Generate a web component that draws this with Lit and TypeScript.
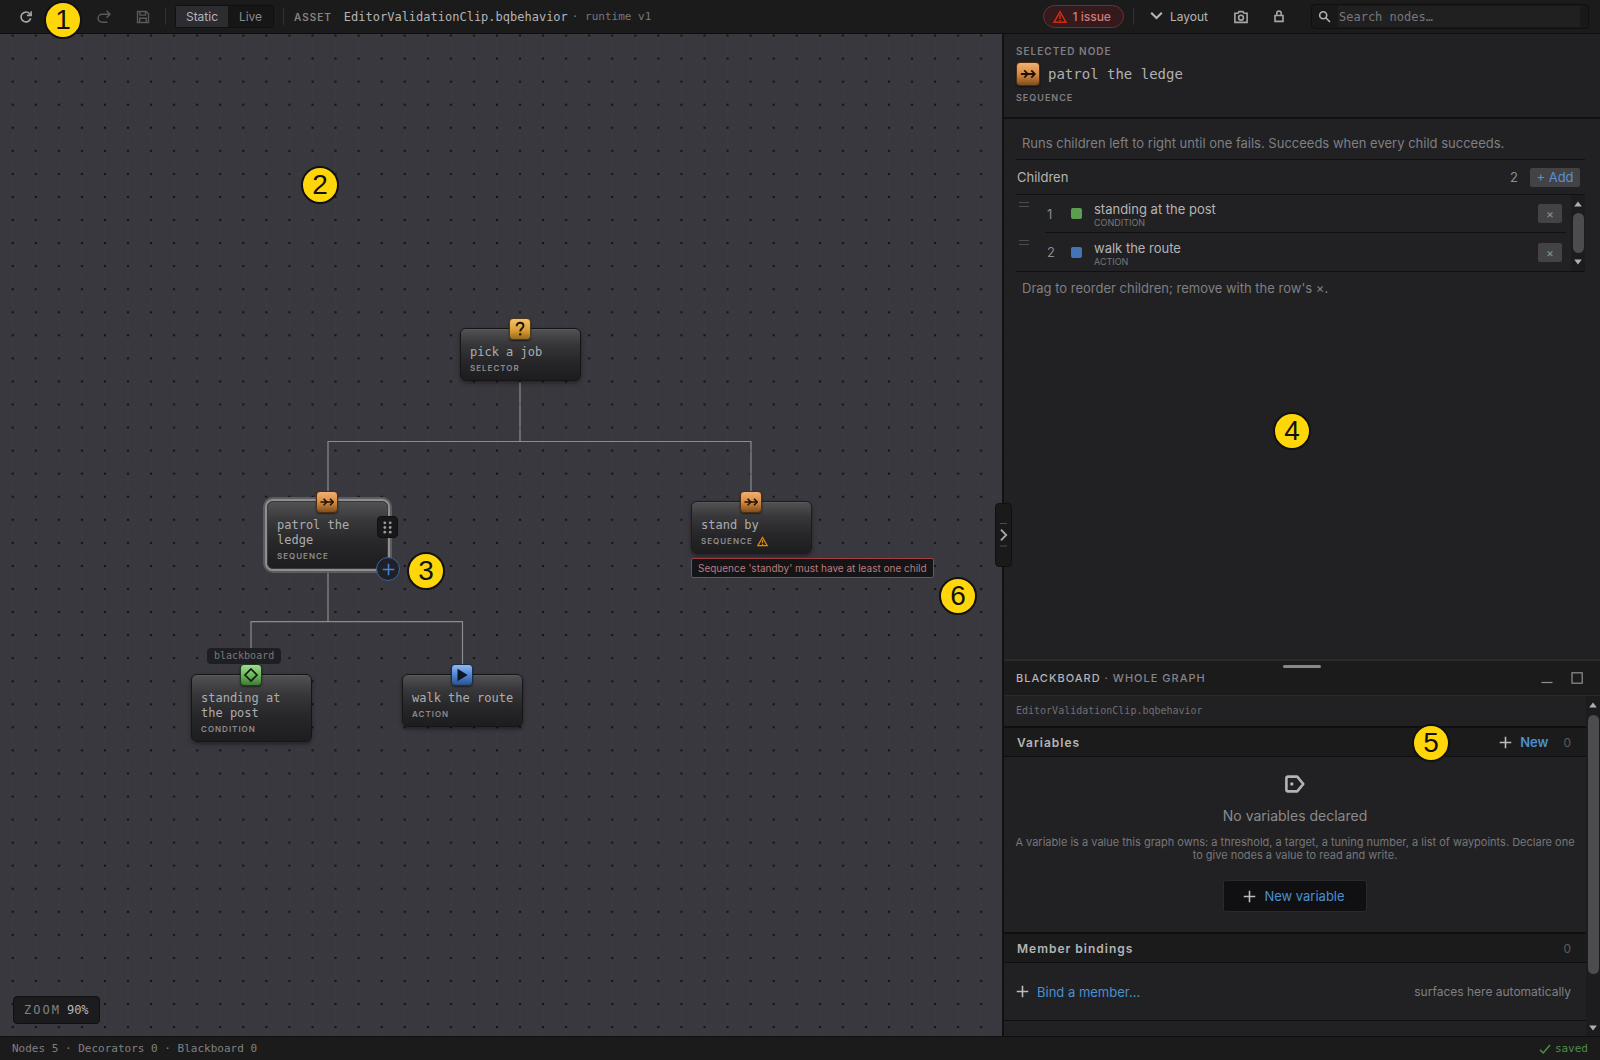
import { LitElement, html, css, svg, nothing } from "lit";
import { customElement, property } from "lit/decorators.js";

type Kind = "selector" | "sequence" | "condition" | "action";

interface GraphNode {
  kind: Kind;
  label: string;
  x: number;
  y: number;
  selected?: boolean;
  invalid?: boolean;
}

const NODES: GraphNode[] = [
  { kind: "selector", label: "pick a job", x: 460, y: 294 },
  { kind: "sequence", label: "patrol the ledge", x: 267, y: 467, selected: true },
  { kind: "sequence", label: "stand by", x: 691, y: 467, invalid: true },
  { kind: "condition", label: "standing at the post", x: 191, y: 640 },
  { kind: "action", label: "walk the route", x: 402, y: 640 },
];

const CALLOUTS = [
  { n: 1, x: 63, y: 20 },
  { n: 2, x: 320, y: 185 },
  { n: 3, x: 426, y: 571 },
  { n: 4, x: 1292, y: 431 },
  { n: 5, x: 1431, y: 743 },
  { n: 6, x: 958, y: 596 },
];

const CHILDREN = [
  { name: "standing at the post", kind: "condition" },
  { name: "walk the route", kind: "action" },
];

const glyphs = {
  selector: svg`<path d="M7.6 8.2c0-2.1 1.4-3.4 3.5-3.4s3.4 1.2 3.4 3c0 2.6-3.3 2.8-3.3 5.6" fill="none" stroke="#1c1508" stroke-width="1.9"/><rect x="10.1" y="15.2" width="2.2" height="2.2" fill="#1c1508"/>`,
  sequence: svg`<g fill="none" stroke="#1c1208" stroke-width="1.6"><path d="M4.500 11H17"/><path d="M7.600 7.800 10.800 11l-3.200 3.200M14 7.800 17.200 11 14 14.200"/></g>`,
  condition: svg`<path d="M11 5 17 11 11 17 5 11Z" fill="none" stroke="#0f1c0c" stroke-width="1.7"/>`,
  action: svg`<path d="M6.500 4.800 16.600 11 6.500 17.200Z" fill="#0c1626"/>`,
};

const warning = html`<svg class="warn" viewBox="0 0 14 14" aria-hidden="true">
  <path d="M7 1.800 13 12.300H1Z" fill="none" stroke="currentColor" stroke-width="1.500" />
  <path d="M7 5v4M7 10v1.400" fill="none" stroke="currentColor" stroke-width="1.500" />
</svg>`;

const plus = html`<svg class="plus" viewBox="0 0 14 14" aria-hidden="true">
  <path d="M7 .8v12.400M.8 7h12.400" stroke="currentColor" stroke-width="1.700" />
</svg>`;

const arrow = (dir: "up" | "down") => html`<svg class="arrow" viewBox="0 0 8 6" aria-hidden="true">
  <path d=${dir === "up" ? "M4 .5 7.8 5.5H.2Z" : "M4 5.5 7.8 .5H.2Z"} fill="#b0b0b2" />
</svg>`;

@customElement("kind-badge")
export class KindBadge extends LitElement {
  @property() kind: Kind = "sequence";

  static styles = css`
    :host { display: block; width: 22px; height: 22px; }
    .badge {
      box-sizing: border-box;
      width: 100%;
      height: 100%;
      border: 1px solid #4a2f14;
      border-radius: 4px;
      box-shadow: 0 1px 2px #0008;
      overflow: hidden;
    }
    .selector { background: linear-gradient(#f3c26a, #dd9f35 55%, #946a22); border-color: #4d3a18; }
    .sequence { background: linear-gradient(#f0b074, #d98a3f 50%, #7e4e20); }
    .condition { background: linear-gradient(#a5d996, #6ab95a 50%, #3f7a35); border-color: #1f3a1c; }
    .action { background: linear-gradient(#93b9f0, #4d86d6 50%, #2c5088); border-color: #1b2d4a; }
    svg { display: block; width: 100%; height: 100%; }
  `;

  render() {
    return html`<div class="badge ${this.kind}">
      <svg viewBox="1 1 20 20" aria-hidden="true">${glyphs[this.kind]}</svg>
    </div>`;
  }
}

@customElement("graph-node")
export class GraphNodeCard extends LitElement {
  @property({ attribute: false }) node!: GraphNode;

  static styles = css`
    :host { display: block; width: 121px; font-family: "DejaVu Sans Mono", monospace; }
    .card {
      position: relative;
      box-sizing: border-box;
      padding: 16px 4px 6px 9px;
      border: 1px solid #151517;
      border-radius: 6px;
      background: linear-gradient(#525254, #38383a 28%, #272729 62%, #1d1d1f);
      box-shadow: 0 2px 4px #0006, inset 0 1px 0 #5a5a5c;
      color: #adadaf;
    }
    .selected { box-shadow: 0 0 0 2px #8f8f92, 0 0 0 4px #5b5b60; border-color: #3a3a3c; }
    .invalid { border-color: #2c1518; }
    kind-badge { position: absolute; top: -11px; left: 50%; margin-left: -12px; }
    .name { font-size: 12px; line-height: 15px; }
    .kind {
      display: flex;
      align-items: center;
      gap: 4px;
      margin-top: 2px;
      font: 600 8px/12px Inter, sans-serif;
      letter-spacing: 1px;
      text-transform: uppercase;
      color: #8c8c8f;
    }
    .warn { width: 11px; height: 11px; color: #d98a14; }
    button { position: absolute; display: grid; place-items: center; padding: 0; }
    .grip {
      top: 14px;
      right: -11px;
      width: 21px;
      height: 22px;
      border: 1px solid #101011;
      border-radius: 4px;
      background: #18181a;
    }
    .add {
      right: -13px;
      bottom: -13px;
      width: 24px;
      height: 24px;
      border: 1px solid #3c659f;
      border-radius: 50%;
      background: #1e2128;
      color: #4a82cf;
    }
    .grip svg { width: 9px; height: 13px; }
    .add svg { width: 13px; height: 13px; }
  `;

  render() {
    const { kind, label, selected, invalid } = this.node;
    return html`<article class="card ${selected ? "selected" : ""} ${invalid ? "invalid" : ""}">
      <kind-badge .kind=${kind}></kind-badge>
      <div class="name">${label}</div>
      <div class="kind">${kind}${invalid ? warning : nothing}</div>
      ${selected
        ? html`<button class="grip" aria-label="Move node">
              <svg viewBox="0 0 9 13" fill="#9a9a9c">
                ${[1.8, 6.5, 11.2].map((y) => svg`<circle cx="1.8" cy=${y} r="1.4"/><circle cx="7.2" cy=${y} r="1.4"/>`)}
              </svg>
            </button>
            <button class="add" aria-label="Add child">${plus}</button>`
        : nothing}
    </article>`;
  }
}

@customElement("graph-canvas")
export class GraphCanvas extends LitElement {
  static styles = css`
    :host { display: block; position: relative; min-width: 0; background: #39383e; }
    .edges { position: absolute; inset: 0; width: 100%; height: 100%; }
    graph-node, .tag, .error, .zoom, .collapse { position: absolute; }
    .tag {
      left: 207px;
      top: 614px;
      padding: 0 7px;
      border-radius: 4px;
      background: #1f1f23;
      color: #77777b;
      font: 10px/16px "DejaVu Sans Mono", monospace;
    }
    .error {
      left: 691px;
      top: 524px;
      padding: 0 6px;
      border: 1px solid #a23f45;
      border-radius: 2px;
      background: #151416;
      color: #bd7b7d;
      font: 10px/18px Inter, sans-serif;
      white-space: nowrap;
    }
    .zoom {
      left: 13px;
      bottom: 12px;
      display: flex;
      gap: 6px;
      padding: 0 10px;
      border: 1px solid #101012;
      border-radius: 4px;
      background: #1c1c1e;
      color: #b8b8ba;
      font: 12px/26px "DejaVu Sans Mono", monospace;
    }
    .zoom span { color: #808084; letter-spacing: 2px; }
    .collapse {
      z-index: 2;
      top: 50%;
      right: -10px;
      display: grid;
      place-items: center;
      width: 17px;
      height: 64px;
      margin-top: -32px;
      padding: 0;
      border: 1px solid #101012;
      border-radius: 4px;
      background: #1a1a1b;
    }
    .collapse svg { width: 9px; height: 28px; }
  `;

  render() {
    return html`
      <svg class="edges" aria-hidden="true">
        <defs>
          <pattern id="dots" x="1.2" y="-10" width="23.06" height="23.06" patternUnits="userSpaceOnUse">
            <path d="M11.5 0V23.06M0 11.5H23.06" stroke="#3b3a40" stroke-width="1" />
            <circle cx="11.5" cy="11.5" r="1.25" fill="#131316" />
          </pattern>
        </defs>
        <rect width="100%" height="100%" fill="url(#dots)" />
        <g fill="none" stroke="#8b8b90" stroke-width="1.2">
          <path d="M520 348V407.5M328 457V407.5H751V457" />
          <path d="M328 538V587.7M251 630V587.7H462.5V630" />
        </g>
      </svg>
      ${NODES.map((n) => html`<graph-node .node=${n} style="left:${n.x}px;top:${n.y}px"></graph-node>`)}
      <div class="tag">blackboard</div>
      <div class="error" role="alert">Sequence 'standby' must have at least one child</div>
      <div class="zoom"><span>ZOOM</span>90%</div>
      <button class="collapse" aria-label="Collapse inspector">
        <svg viewBox="0 0 9 28" fill="none">
          <path d="M1 2.500H8M1 25H8" stroke="#4a4a4c" />
          <path d="M2 8.700 7.200 14 2 19.300" stroke="#a5a5a8" stroke-width="1.900" />
        </svg>
      </button>
    `;
  }
}

@customElement("inspector-panel")
export class InspectorPanel extends LitElement {
  static styles = css`
    :host { display: block; min-height: 0; color: #b4b4b6; font-family: Inter, sans-serif; }
    button { font: inherit; border: 0; padding: 0; }
    .head { padding: 10px 12px 12px; border-bottom: 2px solid #111113; }
    .cap {
      font-size: 9px;
      font-weight: 600;
      line-height: 14px;
      letter-spacing: 1px;
      color: #7f7f83;
      text-transform: uppercase;
    }
    .lead { font-size: 10px; }
    .title { display: flex; align-items: center; gap: 8px; margin: 4px 0 5px; }
    .title kind-badge { width: 24px; height: 24px; }
    h2 { margin: 0; font: 14px/24px "DejaVu Sans Mono", monospace; color: #b0b0b2; }
    .body { padding: 9px 15px 0 12px; }
    .note { margin: 0; padding: 3px 6px; font-size: 13px; line-height: 24px; color: #7f7f83; }
    .bar {
      display: flex;
      align-items: center;
      gap: 12px;
      height: 34px;
      margin-top: 1px;
      padding: 0 5px 0 1px;
      border-top: 1px solid #101012;
      border-bottom: 1px solid #101012;
      font-size: 13px;
    }
    .bar h3 { flex: 1; margin: 0; font-size: 13px; font-weight: 400; }
    .bar .count { color: #8f8f92; }
    .bar button {
      width: 50px;
      border-radius: 2px;
      background: #434345;
      color: #5b8fd8;
      font-size: 13px;
      line-height: 19px;
    }
    .list { display: flex; margin-bottom: 1px; border-bottom: 1px solid #101012; }
    ol { flex: 1; margin: 0; padding: 0; list-style: none; }
    li { display: flex; align-items: center; height: 38px; padding-right: 5px; }
    .drag { align-self: flex-start; width: 10px; height: 3px; margin: 7px 16px 0 3px; border: solid #4b4b4d; border-width: 1px 0; }
    .row {
      display: flex;
      flex: 1;
      align-items: center;
      box-sizing: border-box;
      height: 100%;
      padding-right: 4px;
    }
    li:first-child .row { border-bottom: 1px solid #101012; }
    .idx { width: 24px; padding-left: 2px; font-size: 13px; color: #8a8a8d; }
    .swatch { width: 11px; height: 11px; margin-right: 12px; border-radius: 2px; }
    .condition { background: #5c9e50; }
    .action { background: #4474b8; }
    .text { flex: 1; padding-top: 2px; }
    .name { font-size: 13px; line-height: 16px; }
    .type { font-size: 9px; line-height: 11px; color: #77777a; text-transform: uppercase; }
    .remove { width: 24px; height: 19px; border-radius: 2px; background: #434345; color: #8f8f91; font-size: 12px; line-height: 19px; }
    .scroll {
      display: flex;
      flex-direction: column;
      align-items: center;
      width: 14px;
      padding: 6px 0;
      gap: 6px;
      background: #1c1c1e;
    }
    .arrow { width: 8px; height: 6px; }
    .thumb { flex: 1; width: 11px; border-radius: 6px; background: #4c4c4e; }
  `;

  render() {
    return html`
      <header class="head">
        <div class="cap lead">Selected node</div>
        <div class="title"><kind-badge .kind=${"sequence" as Kind}></kind-badge><h2>patrol the ledge</h2></div>
        <div class="cap">Sequence</div>
      </header>
      <div class="body">
        <p class="note">Runs children left to right until one fails. Succeeds when every child succeeds.</p>
        <div class="bar"><h3>Children</h3><span class="count">2</span><button>+ Add</button></div>
        <div class="list">
          <ol>
            ${CHILDREN.map(
              (c, i) => html`<li>
                <span class="drag"></span>
                <div class="row">
                  <span class="idx">${i + 1}</span>
                  <span class="swatch ${c.kind}"></span>
                  <div class="text">
                    <div class="name">${c.name}</div>
                    <div class="type">${c.kind}</div>
                  </div>
                  <button class="remove" aria-label="Remove ${c.name}">×</button>
                </div>
              </li>`,
            )}
          </ol>
          <div class="scroll">${arrow("up")}<span class="thumb"></span>${arrow("down")}</div>
        </div>
        <p class="note">Drag to reorder children; remove with the row's ×.</p>
      </div>
    `;
  }
}

@customElement("blackboard-panel")
export class BlackboardPanel extends LitElement {
  static styles = css`
    :host { display: block; border-top: 2px solid #2b2b2e; color: #b4b4b6; font-family: Inter, sans-serif; }
    button { font: inherit; border: 0; padding: 0; background: none; cursor: pointer; }
    header {
      position: relative;
      display: flex;
      align-items: center;
      box-sizing: border-box;
      height: 35px;
      padding: 0 17px 0 12px;
      border-bottom: 1px solid #2a2a2d;
      background: #1b1b1b;
      font-size: 11px;
      letter-spacing: 1px;
    }
    .grab { position: absolute; top: 4px; left: 50%; width: 38px; height: 3px; margin-left: -19px; border-radius: 2px; background: #88888b; }
    h2 { margin: 0; font-size: 11px; font-weight: 500; }
    .scope { flex: 1; margin-left: 4px; color: #85858a; font-weight: 500; }
    .win { display: flex; gap: 18px; }
    .win svg { display: block; width: 12px; height: 12px; }
    .content { display: flex; }
    .sections { flex: 1; min-width: 0; }
    .file { padding: 0 12px; font: 10px/30px "DejaVu Sans Mono", monospace; color: #707073; }
    .section {
      display: flex;
      align-items: center;
      box-sizing: border-box;
      height: 31px;
      padding: 0 15px 0 13px;
      border: solid #0f0f10;
      border-width: 2px 0 1px;
      background: #1b1b1b;
    }
    h3 { flex: 1; margin: 0; font-size: 12px; font-weight: 600; letter-spacing: 1px; }
    .count { font-size: 12px; color: #5c5c5f; }
    .link { display: inline-flex; align-items: center; gap: 8px; color: #4a90cf; font-size: 13px; }
    .new { margin-right: 15px; font-weight: 600; }
    .plus { width: 13px; height: 13px; color: #bcbcbe; }
    .empty { display: flex; flex-direction: column; align-items: center; padding: 18px 8px 20px; }
    .tagicon { width: 20px; height: 18px; }
    .empty h4 { margin: 11px 0 8px; font-size: 14px; font-weight: 400; line-height: 24px; color: #8a8a8d; }
    .empty p { margin: 0; font-size: 11px; line-height: 13px; text-align: center; color: #77777a; }
    .create { height: 32px; margin-top: 18px; padding: 0 21px 0 19px; border: 1px solid #2a2a2c; border-radius: 3px; background: #101012; }
    .bind { display: flex; align-items: center; justify-content: space-between; height: 57px; padding: 0 15px 0 12px; border-bottom: 1px solid #0f0f10; }
    .hint { font-size: 12px; color: #7f7f82; }
    .tail { height: 15px; }
    .scroll { display: flex; flex-direction: column; align-items: center; box-sizing: border-box; width: 14px; padding: 6px 0 5px; gap: 7px; background: #1c1c1e; }
    .arrow { width: 8px; height: 6px; }
    .thumb { width: 11px; flex: 7; border-radius: 6px; background: #4c4c4e; }
    .track { flex: 1; }
  `;

  render() {
    return html`
      <header>
        <span class="grab"></span>
        <h2>BLACKBOARD</h2>
        <span class="scope">· WHOLE GRAPH</span>
        <div class="win">
          <button aria-label="Minimise"><svg viewBox="0 0 12 12"><path d="M.5 10.500h11" stroke="#929295" stroke-width="1.200" /></svg></button>
          <button aria-label="Maximise"><svg viewBox="0 0 12 12"><rect x="1" y=".8" width="10.200" height="10.400" fill="none" stroke="#929295" stroke-width="1.200" /></svg></button>
        </div>
      </header>
      <div class="content">
        <div class="sections">
          <div class="file">EditorValidationClip.bqbehavior</div>
          <div class="section">
            <h3>Variables</h3>
            <button class="link new">${plus}New</button>
            <span class="count">0</span>
          </div>
          <div class="empty">
            <svg class="tagicon" viewBox="0 0 20 18" aria-hidden="true">
              <path d="M3 1.600H12.200L18.300 9l-6.100 7.400H3Q1.400 16.400 1.400 14.800V3.200Q1.400 1.600 3 1.600Z" fill="none" stroke="#b4b4b6" stroke-width="2.600" stroke-linejoin="round" />
              <circle cx="6.800" cy="9" r="1.700" fill="#b4b4b6" />
            </svg>
            <h4>No variables declared</h4>
            <p>A variable is a value this graph owns: a threshold, a target, a tuning number, a list of waypoints. Declare one to give nodes a value to read and write.</p>
            <button class="link create">${plus}New variable</button>
          </div>
          <div class="section"><h3>Member bindings</h3><span class="count">0</span></div>
          <div class="bind">
            <button class="link">${plus}Bind a member…</button>
            <span class="hint">surfaces here automatically</span>
          </div>
          <div class="tail"></div>
        </div>
        <div class="scroll">${arrow("up")}<span class="thumb"></span><span class="track"></span>${arrow("down")}</div>
      </div>
    `;
  }
}

@customElement("top-bar")
export class TopBar extends LitElement {
  static styles = css`
    :host {
      display: flex;
      align-items: center;
      box-sizing: border-box;
      height: 34px;
      padding: 0 11px 0 6px;
      border-bottom: 1px solid #0e0e0f;
      background: #1b1b1b;
      color: #b4b4b6;
      font: 12px/16px Inter, sans-serif;
    }
    button { display: inline-flex; align-items: center; justify-content: center; font: inherit; color: inherit; background: none; border: 0; padding: 0; cursor: pointer; }
    .tools { display: flex; }
    .icon { width: 38px; height: 24px; color: #a6a6a9; }
    .tools .icon { width: 39px; }
    .icon svg { width: 16px; height: 16px; }
    .icon:disabled { color: #59595b; }
    .sep { width: 1px; height: 17px; background: #303032; }
    .tools + .sep { margin-left: 3px; }
    .seg { display: flex; margin: 0 9px; border: 1px solid #101012; border-radius: 3px; background: #161617; }
    .seg button { width: 45px; height: 21px; color: #8a8a8d; }
    .seg .on { width: 52px; background: #2c2c31; color: #b4b4b6; }
    .asset { margin: 0 12px 0 10px; font-size: 10px; font-weight: 600; letter-spacing: 1px; color: #858588; }
    .mono { font-family: "DejaVu Sans Mono", monospace; }
    .runtime { margin-left: 4px; font-size: 11px; color: #77777a; }
    .space { flex: 1; }
    .issue { gap: 6px; height: 23px; margin-right: 9px; padding: 0 12px 0 9px; border: 1px solid #7b2a2d; border-radius: 12px; background: #341a1c; color: #cf7b7b; font-weight: 500; }
    .issue svg { width: 14px; height: 14px; color: #d02a10; }
    .layout { gap: 7px; margin: 0 14px 0 16px; }
    .layout svg { width: 13px; height: 13px; margin-top: -2px; }
    .search {
      display: flex;
      align-items: center;
      gap: 7px;
      box-sizing: border-box;
      width: 278px;
      height: 25px;
      margin-left: 13px;
      padding: 0 8px 0 6px;
      border: 1px solid #0f0f10;
      border-radius: 4px;
      background: #19191a;
    }
    .search svg { width: 13px; height: 13px; }
    input { flex: 1; min-width: 0; height: 21px; box-sizing: border-box; border: 0; padding: 0 1px; background: #202021; color: #b4b4b6; font: 12px "DejaVu Sans Mono", monospace; }
    input::placeholder { color: #77777a; opacity: 1; }
  `;

  render() {
    return html`
      <div class="tools">
        <button class="icon" aria-label="Reload">
          <svg viewBox="0 0 16 16" fill="none" stroke="currentColor" stroke-width="1.600"><path d="M12.700 9.200A4.900 4.900 0 1 1 11.600 4.700L13 6.100" /><path d="M13.100 2.200v4.200H8.900" /></svg>
        </button>
        <button class="icon" disabled aria-label="Undo">
          <svg viewBox="0 0 16 16" fill="none" stroke="currentColor" stroke-width="1.500"><path d="M6 2.500 3 5.500l3 3M3.300 5.500H10a3.700 3.700 0 0 1 0 7.400H6" /></svg>
        </button>
        <button class="icon" disabled aria-label="Redo">
          <svg viewBox="0 0 16 16" fill="none" stroke="currentColor" stroke-width="1.500"><path d="M10.500 1.800 14 5.300l-3.500 3.500M13.500 5.300H6a3.900 3.900 0 0 0 0 7.900h5.500" /></svg>
        </button>
        <button class="icon" disabled aria-label="Save">
          <svg viewBox="0 0 16 16" fill="none" stroke="currentColor" stroke-width="1.400"><path d="M2.500 2.500h8.700l2.300 2.300v8.700h-11ZM5 2.500v3.600h5.500V2.500M4.700 13.500V9.300h6.600v4.200" /></svg>
        </button>
      </div>
      <span class="sep"></span>
      <div class="seg"><button class="on" aria-pressed="true">Static</button><button aria-pressed="false">Live</button></div>
      <span class="sep"></span>
      <span class="asset">ASSET</span>
      <span class="mono">EditorValidationClip.bqbehavior</span>
      <span class="mono runtime">· runtime v1</span>
      <span class="space"></span>
      <button class="issue">${warning}1 issue</button>
      <span class="sep"></span>
      <button class="layout">
        <svg viewBox="0 0 13 13" fill="none" stroke="currentColor" stroke-width="2.100"><path d="M1.200 3.800 6.500 9l5.300-5.200" /></svg>Layout
      </button>
      <button class="icon" aria-label="Screenshot">
        <svg viewBox="0 0 16 16" fill="none" stroke="currentColor" stroke-width="1.600"><path d="M1.900 4.300H5L6 2.600h4l1 1.700h3.100v9.100H1.900Z" /><circle cx="8" cy="8.700" r="2.400" /></svg>
      </button>
      <button class="icon" aria-label="Lock">
        <svg viewBox="0 0 16 16" fill="none" stroke="currentColor" stroke-width="1.600"><path d="M4 6.500h8v5.900H4ZM5.800 6.500V4.300a2.200 2.200 0 0 1 4.400 0v2.200" /></svg>
      </button>
      <label class="search">
        <svg viewBox="0 0 13 13" fill="none" stroke="currentColor" stroke-width="1.600"><circle cx="5.200" cy="5.200" r="3.500" /><path d="M7.800 7.800 12 12" /></svg>
        <input type="text" placeholder="Search nodes…" aria-label="Search nodes" />
      </label>
    `;
  }
}

@customElement("app-root")
export class AppRoot extends LitElement {
  static styles = css`
    :host { display: block; }
    .app {
      position: relative;
      display: grid;
      grid-template-rows: auto minmax(0, 1fr) auto;
      height: 100vh;
      background: #212123;
      overflow: hidden;
    }
    main { display: grid; grid-template-columns: minmax(0, 501fr) minmax(0, 299fr); min-height: 0; }
    aside {
      display: grid;
      grid-template-rows: minmax(0, 1fr) auto;
      min-height: 0;
      border-left: 2px solid #111113;
      background: #212123;
    }
    footer {
      display: flex;
      justify-content: space-between;
      padding: 0 12px;
      border-top: 1px solid #0e0e0f;
      background: #1b1b1b;
      color: #808083;
      font: 11px/23px "DejaVu Sans Mono", monospace;
    }
    .saved { display: flex; align-items: center; gap: 4px; color: #4d8f48; }
    .saved svg { width: 12px; height: 12px; }
    .callout {
      position: absolute;
      z-index: 5;
      box-sizing: border-box;
      width: 38px;
      height: 38px;
      margin: -19px 0 0 -19px;
      border: 2px solid #111;
      border-radius: 50%;
      background: #ffd60a;
      color: #111;
      font: 28px/34px "Liberation Sans", Arial, sans-serif;
      text-align: center;
    }
  `;

  render() {
    return html`<div class="app">
      <top-bar></top-bar>
      <main>
        <graph-canvas></graph-canvas>
        <aside>
          <inspector-panel></inspector-panel>
          <blackboard-panel></blackboard-panel>
        </aside>
      </main>
      <footer>
        <span>Nodes 5 · Decorators 0 · Blackboard 0</span>
        <span class="saved"><svg viewBox="0 0 12 12" fill="none" stroke="currentColor" stroke-width="1.500"><path d="M1 6.800 4.200 10 11 2" /></svg>saved</span>
      </footer>
      ${CALLOUTS.map((c) => html`<span class="callout" style="left:${c.x}px;top:${c.y}px">${c.n}</span>`)}
    </div>`;
  }
}
